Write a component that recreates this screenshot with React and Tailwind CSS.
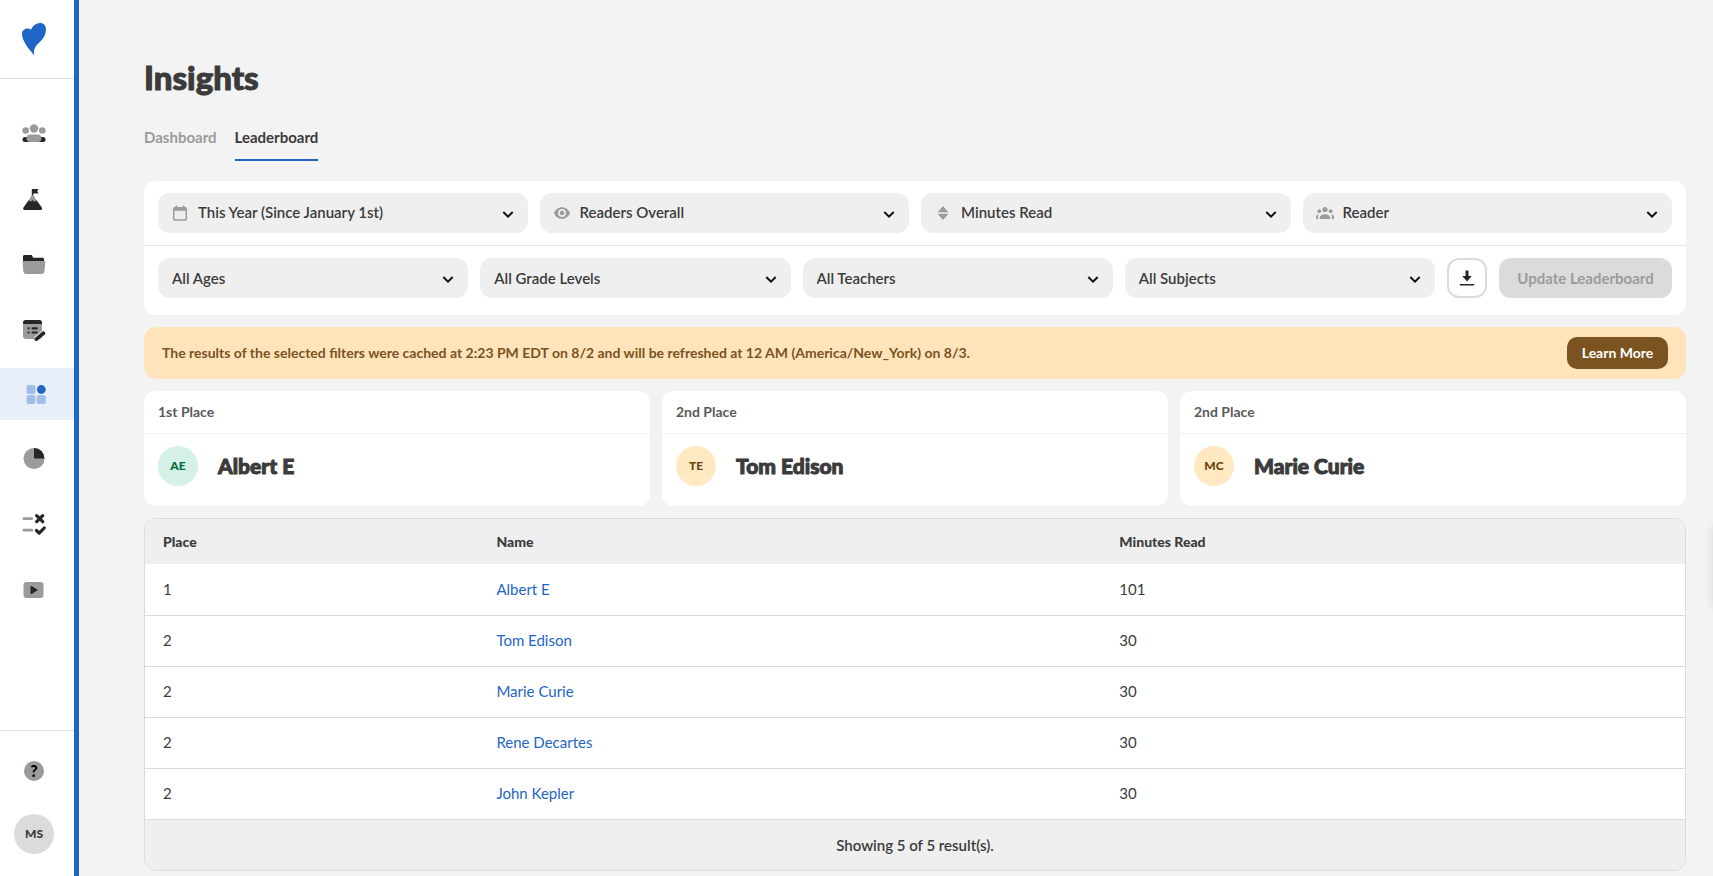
import { clsx } from 'clsx';

const PERIODS = ['This Year (Since January 1st)', 'This Month', 'This Week'];
const SCOPES = ['Readers Overall', 'Readers by Group'];
const METRICS = ['Minutes Read', 'Books Read'];
const SUBJECTS = ['Reader', 'Group'];

const REFINEMENTS = [
    { label: 'Age', options: ['All Ages'] },
    { label: 'Grade level', options: ['All Grade Levels'] },
    { label: 'Teacher', options: ['All Teachers'] },
    { label: 'Subject', options: ['All Subjects'] },
];

const PODIUM = [
    { place: '1st Place', initials: 'AE', name: 'Albert E', tone: 'bg-[#d5f0e4] text-[#00693e]' },
    { place: '2nd Place', initials: 'TE', name: 'Tom Edison', tone: 'bg-[#ffe8c2] text-[#6b4410]' },
    { place: '2nd Place', initials: 'MC', name: 'Marie Curie', tone: 'bg-[#ffe8c2] text-[#6b4410]' },
];

const ROWS = [
    { place: 1, name: 'Albert E', minutes: 101 },
    { place: 2, name: 'Tom Edison', minutes: 30 },
    { place: 2, name: 'Marie Curie', minutes: 30 },
    { place: 2, name: 'Rene Decartes', minutes: 30 },
    { place: 2, name: 'John Kepler', minutes: 30 },
];

function Logo() {
    return (
        <svg className="h-8 w-6" viewBox="0 0 24 32" fill="#1f65c6">
            <path d="M11.2 31.8C10.4 29 7 27 3.6 21.2C1 16.800 0 13.600 0 11C0 7.600 2.400 5.400 5.400 5.400C7 5.400 8.200 5.900 8.900 6.800C10.400 3 14 0 18 0C21.600 0 24 2.500 24 6.400C24 11 21.500 15.500 17.500 19.300C14.200 22.400 11.700 24.500 11.900 31.700Z" />
        </svg>
    );
}

function PeopleIcon() {
    return (
        <svg className="h-6 w-6" viewBox="0 0 24 24">
            <rect x="0.500" y="15" width="23" height="5" rx="2.500" fill="#262626" />
            <rect x="4.500" y="12.500" width="15" height="7.500" rx="3.700" fill="#9b9b9b" />
            <circle cx="12" cy="6.500" r="4.200" fill="#9b9b9b" />
            <circle cx="3.700" cy="8.500" r="3.300" fill="#9b9b9b" />
            <circle cx="20.300" cy="8.500" r="3.300" fill="#9b9b9b" />
        </svg>
    );
}

function MountainIcon() {
    return (
        <svg className="h-6 w-6" viewBox="0 0 24 24">
            <path d="M9.800 9V2.700a.7.700 0 0 1 .7-.7h6l-1.200 2.200 1.200 2.300h-5.200V9Z" fill="#262626" />
            <path d="M9.600 8.600c.5-.8 1.500-.8 2 0l3.700 6H6Z" fill="#9b9b9b" />
            <path d="m6.600 13.300 2 1.200 2-1.200 2 1.200 2-1.200 5.200 7.200c.8 1.200.2 2.500-1.200 2.500H2.700c-1.400 0-2-1.300-1.200-2.500Z" fill="#262626" />
        </svg>
    );
}

function FolderIcon() {
    return (
        <svg className="h-6 w-6" viewBox="0 0 24 24">
            <path d="M1 11V4.500C1 3.500 1.700 3 2.600 3h6.200c.9 0 1.300.5 1.600 1.200l.7 1.600h9.300c1 0 1.600.7 1.600 1.600V11Z" fill="#262626" />
            <path d="M.5 9h22.800l-.8 10c-.2 1.800-1.200 3-3 3H4.300c-1.800 0-2.800-1.200-3-3Z" fill="#9b9b9b" />
        </svg>
    );
}

function AssignmentIcon() {
    return (
        <svg className="h-6 w-6" viewBox="0 0 24 24">
            <rect x="1" y="3" width="19" height="19" rx="3" fill="#9b9b9b" />
            <path d="M1 7V6a3 3 0 0 1 3-3h13a3 3 0 0 1 3 3v1Z" fill="#262626" />
            <path d="M6.500 11.300h.1M6.500 15.500h.1M10.500 11.300h4.200M10.500 15.500h4.200" stroke="#262626" strokeWidth="2.200" strokeLinecap="round" />
            <path d="m14.500 21.500 7-6" stroke="#fff" strokeWidth="4.500" strokeLinecap="round" />
            <path d="m14.400 22.100 6.900-5.900" stroke="#262626" strokeWidth="3.800" strokeLinecap="round" />
        </svg>
    );
}

function InsightsIcon() {
    return (
        <svg className="ml-1 h-5 w-5" viewBox="0 0 20 20">
            <rect x="0.500" y="1" width="9" height="9" rx="2" fill="#a1bde8" />
            <rect x="0.500" y="11" width="9" height="9" rx="2" fill="#a1bde8" />
            <rect x="10.800" y="11" width="9" height="9" rx="2" fill="#a1bde8" />
            <circle cx="15.300" cy="5.500" r="4.400" fill="#1f65c6" />
        </svg>
    );
}

function PieIcon() {
    return (
        <svg className="h-6 w-6" viewBox="0 0 24 24">
            <circle cx="12" cy="11.500" r="10.500" fill="#9b9b9b" />
            <path d="M12 1A10.500 10.500 0 0 1 22.500 11.500H13a1 1 0 0 1-1-1Z" fill="#262626" />
        </svg>
    );
}

function ChecklistIcon() {
    return (
        <svg className="h-6 w-6" viewBox="0 0 24 24" fill="none" strokeLinecap="round" strokeLinejoin="round">
            <path d="M1.800 6.700h8M1.800 18.200h8" stroke="#9b9b9b" strokeWidth="2.800" />
            <path d="m14.700 3.700 6 6m0-6-6 6M14.500 18.500l2.700 2.700 5-5.200" stroke="#262626" strokeWidth="3.200" />
        </svg>
    );
}

function VideoIcon() {
    return (
        <svg className="h-6 w-6" viewBox="0 0 24 24">
            <rect x="1.500" y="5" width="20" height="16" rx="3" fill="#9b9b9b" />
            <path d="M8.500 9.800c0-.7.5-1 1.100-.7l5.600 3.300c.6.300.6.900 0 1.200l-5.600 3.300c-.6.300-1.100 0-1.100-.7Z" fill="#262626" />
        </svg>
    );
}

const NAV = [
    { label: 'Readers', icon: PeopleIcon },
    { label: 'Challenges', icon: MountainIcon },
    { label: 'Library', icon: FolderIcon },
    { label: 'Assignments', icon: AssignmentIcon },
    { label: 'Insights', icon: InsightsIcon, active: true },
    { label: 'Reports', icon: PieIcon },
    { label: 'Approvals', icon: ChecklistIcon },
    { label: 'Videos', icon: VideoIcon },
];

function CalendarIcon() {
    return (
        <svg className="h-4 w-4" viewBox="0 0 16 16" fill="#9b9b9b">
            <path fillRule="evenodd" d="M3.500.5h1.700V2h5.600V.500h1.700V2h1A1.500 1.500 0 0 1 15 3.500v10.700a1.500 1.500 0 0 1-1.500 1.500h-11A1.500 1.500 0 0 1 1 14.200V3.500A1.500 1.500 0 0 1 2.500 2h1Zm-1 5.200v8.500h11V5.700Z" />
        </svg>
    );
}

function EyeIcon() {
    return (
        <svg className="h-4 w-4" viewBox="0 0 16 16" fill="#9b9b9b">
            <path fillRule="evenodd" d="M8 2.200c3.700 0 6.700 2.300 8 5.800-1.300 3.500-4.300 5.800-8 5.800S1.300 11.500 0 8c1.300-3.500 4.300-5.800 8-5.800Zm0 1.900a3.900 3.900 0 1 0 0 7.800 3.900 3.900 0 0 0 0-7.800Z" />
            <circle cx="8" cy="8" r="2.300" />
        </svg>
    );
}

function SortIcon() {
    return (
        <svg className="h-4 w-4" viewBox="0 0 16 16" fill="#9b9b9b">
            <path d="M8 1l5.500 6.300h-11ZM8 15l5.500-6.300h-11Z" />
        </svg>
    );
}

function GroupIcon() {
    return (
        <svg className="h-4 w-5" viewBox="0 0 20 16" fill="#9b9b9b">
            <circle cx="10" cy="4.500" r="2.600" />
            <circle cx="4.300" cy="6.200" r="1.900" />
            <circle cx="15.700" cy="6.200" r="1.900" />
            <path d="M4.800 14v-1.500c0-2 2.200-3.300 5.200-3.300s5.200 1.300 5.200 3.300V14ZM1 14v-1.800c0-1.500 1-2.600 2.800-2.700-.5.800-.7 1.700-.7 2.700V14ZM19 14v-1.800c0-1.500-1-2.600-2.800-2.700.5.800.7 1.700.7 2.700V14Z" />
        </svg>
    );
}

function FilterSelect({ label, options, icon: Icon }) {
    return (
        <div className="relative min-w-0 flex-1">
            {Icon && (
                <span className="pointer-events-none absolute inset-y-0 left-0 flex w-11 items-center justify-center">
                    <Icon />
                </span>
            )}
            <select
                aria-label={label}
                className={clsx(
                    'h-10 w-full appearance-none rounded-xl bg-[#efefef] pr-10 text-[15px] font-semibold text-[#3b3b3b] outline-none',
                    Icon ? 'pb-0.5 pl-10' : 'pl-3.5'
                )}
            >
                {options.map((option) => (
                    <option key={option}>{option}</option>
                ))}
            </select>
            <svg
                className="pointer-events-none absolute top-4 right-3.5 h-3 w-3"
                viewBox="0 0 12 12"
                fill="none"
                stroke="#111"
                strokeWidth="2"
            >
                <path d="m1.300 3 4.700 4.700L10.700 3" />
            </svg>
        </div>
    );
}

function Sidebar() {
    return (
        <aside className="flex w-[79px] shrink-0 flex-col border-r-[5px] border-[#1f65c6] bg-white">
            <a href="#" aria-label="Home" className="flex h-[79px] items-center border-b border-[#e0e0e0] pl-[22px]">
                <Logo />
            </a>
            <nav className="flex flex-col gap-[13px] pt-[29px]">
                {NAV.map(({ label, icon: Icon, active }) => (
                    <a
                        key={label}
                        href="#"
                        aria-label={label}
                        className={clsx('flex h-[52px] items-center justify-center pr-1.5', active && 'bg-[#e7eff9]')}
                    >
                        <Icon />
                    </a>
                ))}
            </nav>
            <div className="mt-auto flex flex-col items-center gap-[33px] border-t border-[#e0e0e0] pt-[30px] pr-1.5 pb-[22px]">
                <button
                    type="button"
                    aria-label="Help"
                    className="flex h-5 w-5 items-center justify-center rounded-full bg-[#9b9b9b] text-base font-black text-black"
                >
                    ?
                </button>
                <button
                    type="button"
                    className="flex h-10 w-10 items-center justify-center rounded-full bg-[#dbdbdb] text-xs font-black text-[#3b3b3b]"
                >
                    MS
                </button>
            </div>
        </aside>
    );
}

function Filters() {
    return (
        <section className="mt-5 rounded-xl bg-white">
            <div className="flex gap-3 border-b border-[#e3e3e3] px-3.5 py-3">
                <FilterSelect label="Period" options={PERIODS} icon={CalendarIcon} />
                <FilterSelect label="Scope" options={SCOPES} icon={EyeIcon} />
                <FilterSelect label="Metric" options={METRICS} icon={SortIcon} />
                <FilterSelect label="Ranked by" options={SUBJECTS} icon={GroupIcon} />
            </div>
            <div className="flex gap-3 px-3.5 pt-3 pb-[17px]">
                {REFINEMENTS.map((filter) => (
                    <FilterSelect key={filter.label} {...filter} />
                ))}
                <button
                    type="button"
                    aria-label="Download"
                    className="flex h-10 w-10 items-center justify-center rounded-xl border-2 border-[#dbdbdb] bg-white"
                >
                    <svg className="h-4 w-4" viewBox="0 0 16 16" fill="#262626">
                        <path d="M6.500.5h3V6h3.300L8 11.500 3.200 6h3.300ZM.8 14h14.400v1.600H.8Z" />
                    </svg>
                </button>
                <button type="button" disabled className="h-10 w-[173px] rounded-xl bg-[#dbdbdb] text-[15px] font-bold text-[#9b9b9b]">
                    Update Leaderboard
                </button>
            </div>
        </section>
    );
}

function Podium() {
    return (
        <section className="mt-3 grid grid-cols-3 gap-3">
            {PODIUM.map((entry) => (
                <article key={entry.name} className="rounded-xl bg-white">
                    <h2 className="border-b border-[#f0f0f0] px-3.5 py-[11px] text-sm font-bold text-[#5a5a5a]">
                        {entry.place}
                    </h2>
                    <div className="flex items-center gap-5 px-3.5 pt-3 pb-5">
                        <span
                            className={clsx(
                                'flex h-10 w-10 items-center justify-center rounded-full text-xs font-black',
                                entry.tone
                            )}
                        >
                            {entry.initials}
                        </span>
                        <span className="text-[21px] leading-7 font-black text-[#3b3b3b] [-webkit-text-stroke:1px]">
                            {entry.name}
                        </span>
                    </div>
                </article>
            ))}
        </section>
    );
}

function Results() {
    return (
        <div className="mt-3 overflow-hidden rounded-xl border border-[#dbdbdb] bg-white">
            <table className="w-full table-fixed text-left text-[15px] text-[#3b3b3b]">
                <colgroup>
                    <col className="w-[21.65%]" />
                    <col className="w-[40.45%]" />
                    <col />
                </colgroup>
                <thead className="bg-[#efefef] text-sm">
                    <tr className="h-[45px]">
                        <th className="px-[18px] font-black">Place</th>
                        <th className="px-[18px] font-black">Name</th>
                        <th className="px-[18px] font-black">Minutes Read</th>
                    </tr>
                </thead>
                <tbody>
                    {ROWS.map((row) => (
                        <tr key={row.name} className="h-[51px] border-b border-[#dbdbdb]">
                            <td className="px-[18px]">{row.place}</td>
                            <td className="px-[18px]">
                                <a href="#" className="text-[#1f65c6]">
                                    {row.name}
                                </a>
                            </td>
                            <td className="px-[18px]">{row.minutes}</td>
                        </tr>
                    ))}
                </tbody>
                <tfoot className="bg-[#efefef]">
                    <tr className="h-[51px]">
                        <td colSpan={3} className="text-center font-semibold">
                            Showing 5 of 5 result(s).
                        </td>
                    </tr>
                </tfoot>
            </table>
        </div>
    );
}

export default function App() {
    return (
        <div className="flex min-h-screen bg-[#f3f3f3] font-['Lato',sans-serif] text-[#3b3b3b]">
            <Sidebar />
            <main className="min-w-0 flex-1 pt-[57px] pr-[27px] pl-[65px]">
                <h1 className="text-[33px] leading-10 font-black [-webkit-text-stroke:1px]">Insights</h1>
                <nav className="mt-[30px] flex gap-[18px] text-[15px] leading-5 font-bold">
                    <a href="#" className="h-[34px] text-[#9b9b9b]">
                        Dashboard
                    </a>
                    <a href="#" className="h-[34px] border-b-2 border-[#1f65c6]" aria-current="page">
                        Leaderboard
                    </a>
                </nav>
                <Filters />
                <section className="mt-3 flex h-[52px] items-center justify-between rounded-xl bg-[#ffe4bb] px-[18px]">
                    <p className="text-sm font-bold text-[#7a5321]">
                        The results of the selected filters were cached at 2:23 PM EDT on 8/2 and will be refreshed at 12 AM
                        (America/New_York) on 8/3.
                    </p>
                    <button type="button" className="h-8 w-[101px] rounded-[10px] bg-[#7a5321] text-sm font-bold text-white">
                        Learn More
                    </button>
                </section>
                <Podium />
                <Results />
            </main>
            {/* collapsed drawer, only its shadow reaches the page */}
            <div className="fixed top-[524px] -right-4 h-[86px] w-4 rounded-l-lg shadow-[0_0_10px_rgba(0,0,0,0.12)]" />
        </div>
    );
}
